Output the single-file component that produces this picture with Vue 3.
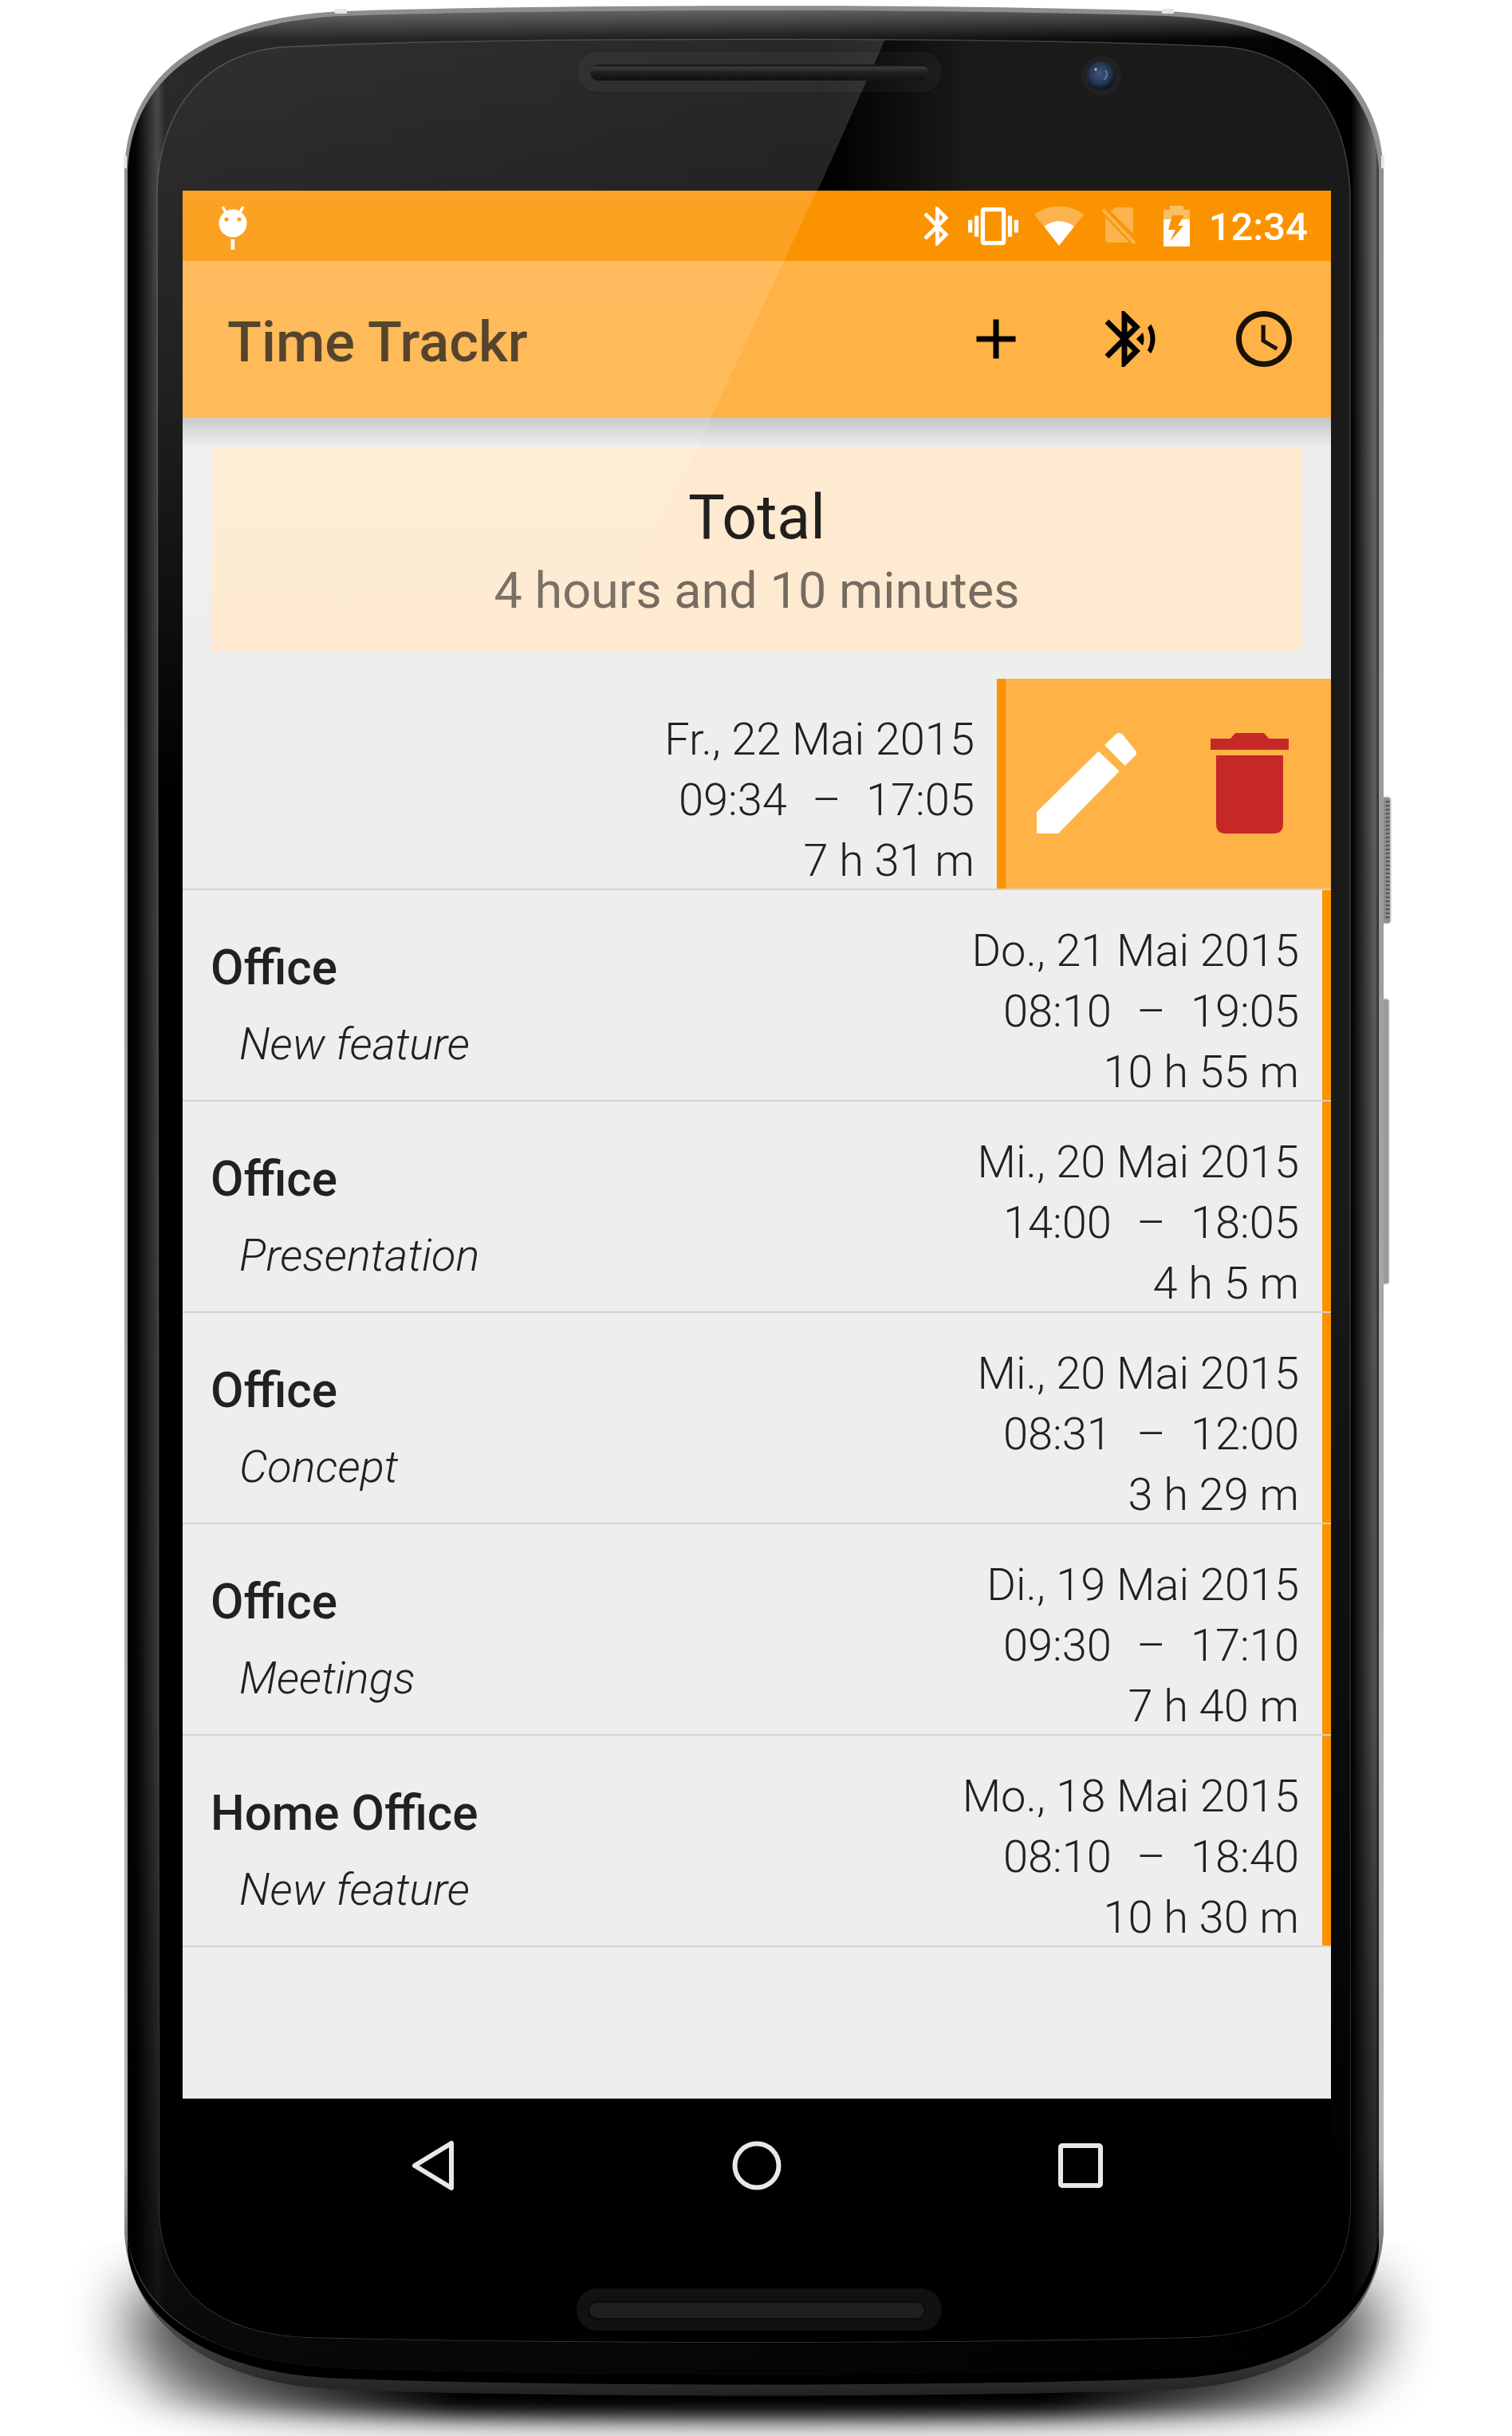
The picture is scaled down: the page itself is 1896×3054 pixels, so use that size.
<script setup>
const openRow = { date: 'Fr., 22 Mai 2015', time: '09:34  –  17:05', total: '7 h 31 m' }
const rows = [
  { title: 'Office', note: 'New feature', date: 'Do., 21 Mai 2015', time: '08:10  –  19:05', total: '10 h 55 m' },
  { title: 'Office', note: 'Presentation', date: 'Mi., 20 Mai 2015', time: '14:00  –  18:05', total: '4 h 5 m' },
  { title: 'Office', note: 'Concept', date: 'Mi., 20 Mai 2015', time: '08:31  –  12:00', total: '3 h 29 m' },
  { title: 'Office', note: 'Meetings', date: 'Di., 19 Mai 2015', time: '09:30  –  17:10', total: '7 h 40 m' },
  { title: 'Home Office', note: 'New feature', date: 'Mo., 18 Mai 2015', time: '08:10  –  18:40', total: '10 h 30 m' }
]
const outer = 'M156 210C162 88 262 22 430 14C700 5 1190 5 1462 14C1628 22 1728 88 1735 210V2800C1728 2904 1640 2990 1462 2996C1190 3006 700 3006 430 2996C250 2990 162 2904 156 2800Z'
const mid = 'M160 212C166 94 266 28 430 20C700 11 1190 11 1462 20C1624 28 1722 94 1729 212V2798C1722 2892 1636 2962 1462 2969C1190 2979 700 2979 430 2969C254 2962 166 2892 160 2798Z'
const glass = 'M197 240C200 130 262 68 352 59C620 46 1270 46 1540 59C1628 68 1688 130 1693 240V2775C1688 2870 1620 2925 1500 2930C1200 2938 690 2938 383 2930C270 2925 204 2870 200 2775Z'
</script>

<template>
  <div class="page">
    <svg class="device" width="1896" height="3054" viewBox="0 0 1896 3054">
      <defs>
        <filter id="blur" x="-20%" y="-40%" width="140%" height="180%"><feGaussianBlur stdDeviation="40" /></filter>
        <filter id="blurTight" x="-10%" y="-60%" width="120%" height="220%"><feGaussianBlur stdDeviation="12" /></filter>
        <linearGradient id="tightFade" gradientUnits="userSpaceOnUse" x1="170" y1="0" x2="1720" y2="0">
          <stop offset="0" stop-color="#000" stop-opacity="0" /><stop offset=".26" stop-color="#000" /><stop offset=".74" stop-color="#000" /><stop offset="1" stop-color="#000" stop-opacity="0" />
        </linearGradient>
        <linearGradient id="rim" x1="0" y1="0" x2="0" y2="1">
          <stop offset="0" stop-color="#8e8e8e" /><stop offset=".9" stop-color="#b5b5b5" /><stop offset=".97" stop-color="#4a4a4a" /><stop offset="1" stop-color="#222" />
        </linearGradient>
        <linearGradient id="side" gradientUnits="userSpaceOnUse" x1="160" y1="0" x2="1729" y2="0">
          <stop offset="0" stop-color="#000" /><stop offset=".007" stop-color="#050505" /><stop offset=".024" stop-color="#4a4a4a" /><stop offset=".03" stop-color="#2a2a2a" /><stop offset=".5" stop-color="#1a1a1a" /><stop offset=".978" stop-color="#000" /><stop offset=".997" stop-color="#6c6c6c" /><stop offset="1" stop-color="#333" />
        </linearGradient>
        <linearGradient id="sideShade" x1="0" y1="0" x2="0" y2="1">
          <stop offset="0" stop-color="#000" stop-opacity="0" /><stop offset=".72" stop-color="#000" stop-opacity=".25" /><stop offset="1" stop-color="#000" stop-opacity=".8" />
        </linearGradient>
        <linearGradient id="topLight" gradientUnits="userSpaceOnUse" x1="0" y1="12" x2="0" y2="50">
          <stop offset="0" stop-color="#fff" stop-opacity=".32" /><stop offset="1" stop-color="#fff" stop-opacity="0" />
        </linearGradient>
        <linearGradient id="glassBase" gradientUnits="userSpaceOnUse" x1="197" y1="0" x2="1693" y2="0">
          <stop offset="0" stop-color="#000" /><stop offset=".56" stop-color="#000" /><stop offset=".68" stop-color="#1a1a1a" /><stop offset="1" stop-color="#1a1a1a" />
        </linearGradient>
        <linearGradient id="glassFade" gradientUnits="userSpaceOnUse" x1="0" y1="1500" x2="0" y2="2750">
          <stop offset="0" stop-color="#000" stop-opacity="0" /><stop offset="1" stop-color="#000" />
        </linearGradient>
        <linearGradient id="gloss" gradientUnits="userSpaceOnUse" x1="0" y1="46" x2="0" y2="1000">
          <stop offset="0" stop-color="#fff" stop-opacity=".19" /><stop offset=".45" stop-color="#fff" stop-opacity=".13" /><stop offset="1" stop-color="#fff" stop-opacity="0" />
        </linearGradient>
        <linearGradient id="glossSide" gradientUnits="userSpaceOnUse" x1="200" y1="0" x2="1111" y2="0">
          <stop offset="0" stop-color="#000" stop-opacity="0" /><stop offset="1" stop-color="#000" stop-opacity=".45" />
        </linearGradient>
        <linearGradient id="slot" x1="0" y1="0" x2="0" y2="1">
          <stop offset="0" stop-color="#0a0a0a" /><stop offset=".18" stop-color="#3a3a3a" /><stop offset=".5" stop-color="#1f1f1f" /><stop offset="1" stop-color="#111" />
        </linearGradient>
        <radialGradient id="lens" cx=".45" cy=".42" r=".6">
          <stop offset="0" stop-color="#41587f" /><stop offset=".6" stop-color="#263655" /><stop offset="1" stop-color="#0c0f16" />
        </radialGradient>
        <clipPath id="glassClip"><path :d="glass" /></clipPath>
      </defs>

      <path class="shadow" d="M168 2870H1724V2950C1650 3006 1500 3016 945 3016C390 3016 240 3006 168 2950Z" filter="url(#blur)" />
      <path d="M170 2960H1720V3018C1400 3030 1200 3030 945 3030C700 3030 490 3030 170 3018Z" fill="url(#tightFade)" filter="url(#blurTight)" />

      <rect class="key" x="1733" y="999" width="11" height="159" rx="4" />
      <path class="key-grip" d="M1740 1004V1154" />
      <rect class="key key-thin" x="1733" y="1252" width="9" height="358" rx="4" />

      <path :d="outer" fill="url(#rim)" />
      <path :d="mid" fill="url(#side)" />
      <path :d="mid" fill="url(#sideShade)" />
      <path :d="mid" fill="url(#topLight)" />
      <path d="M160 2800C166 2894 254 2962 430 2969C700 2979 1190 2979 1462 2969C1636 2962 1722 2892 1729 2798V2820C1722 2900 1636 2977 1462 2982C1190 2992 700 2992 430 2982C254 2977 166 2900 160 2820Z" fill="#000" />

      <path :d="glass" fill="url(#glassBase)" stroke="#6a6a6a" stroke-width="1.500" stroke-opacity=".55" />
      <g clip-path="url(#glassClip)">
        <polygon points="190,40 1114,40 686,1000 190,1000" fill="url(#gloss)" />
        <polygon points="190,40 1114,40 686,1000 190,1000" fill="url(#glossSide)" opacity=".4" />
        <rect x="190" y="1500" width="1510" height="1450" fill="url(#glassFade)" />
      </g>

      <rect x="723" y="64" width="458" height="52" rx="26" fill="#fff" fill-opacity=".035" stroke="#000" stroke-opacity=".25" />
      <rect x="740" y="81" width="424" height="20" rx="10" fill="url(#slot)" />
      <rect x="723" y="2869" width="458" height="53" rx="26" fill="#111" />
      <rect x="738" y="2886" width="422" height="21" rx="10" fill="#1e1e1e" stroke="#0a0a0a" stroke-width="2" />

      <circle cx="1381" cy="95" r="25" fill="#212121" />
      <ellipse cx="1381" cy="95" rx="18" ry="18" fill="url(#lens)" />
      <path d="M1386 88c3 3 3 9-2 12" fill="none" stroke="#8ea2c4" stroke-width="1.500" opacity=".7" />
      <circle cx="1374" cy="87" r="1.400" fill="#cfd8e8" />

      <rect x="420" y="11" width="15" height="6" fill="#e6e6e6" />
      <rect x="1457" y="11" width="15" height="6" fill="#e6e6e6" />
      <rect x="155" y="195" width="4" height="16" fill="#e6e6e6" />
      <rect x="1732" y="195" width="4" height="16" fill="#e6e6e6" />
    </svg>

    <main class="screen">
      <header class="status">
        <svg class="droid" width="44" height="60" viewBox="0 0 44 60">
          <ellipse cx="22" cy="24" rx="17.500" ry="17.500" fill="#fff" />
          <path d="M9 3l5 9M35 3l-5 9" stroke="#fff" stroke-width="3.500" fill="none" />
          <rect x="19.600" y="44" width="4.600" height="13" fill="#fff" />
          <circle cx="14" cy="19" r="2.600" fill="#fb9300" /><circle cx="30" cy="19" r="2.600" fill="#fb9300" />
        </svg>
        <svg class="st st-bt" width="59" height="59" viewBox="0 0 24 24" fill="#fff">
          <path d="M17.71 7.71L12 2h-1v7.59L6.41 5 5 6.41 10.59 12 5 17.59 6.41 19 11 14.41V22h1l5.71-5.71-4.3-4.29 4.3-4.29zM13 5.83l1.88 1.88L13 9.59V5.83zm1.88 10.46L13 18.17v-3.76l1.88 1.88z" />
        </svg>
        <svg class="st st-vib" width="63" height="63" viewBox="0 0 24 24" fill="#fff">
          <path d="M0 15h2V9H0v6zm3 2h2V7H3v10zm19-8v6h2V9h-2zm-3 8h2V7h-2v10zM16.5 3h-9C6.67 3 6 3.67 6 4.5v15c0 .83.67 1.5 1.5 1.5h9c.83 0 1.5-.67 1.5-1.5v-15c0-.83-.67-1.5-1.5-1.5zM16 19H8V5h8v14z" />
        </svg>
        <svg class="st st-wifi" width="62" height="50" viewBox="0 0 62 50">
          <path d="M0 11C18-3 44-3 62 11L31 50Z" fill="#fff" fill-opacity=".3" />
          <path d="M12.500 26C23 17 39 17 50 26L31 50Z" fill="#fff" />
        </svg>
        <svg class="st st-sim" width="45" height="46" viewBox="0 0 45 46" fill="#fff" fill-opacity=".3">
          <path d="M18 0H36Q40 0 40 4V33L12 5Z" />
          <path d="M5 12L35 44H9Q5 44 5 40Z" />
          <path d="M2 3L42 45" stroke="#fff" stroke-opacity=".3" stroke-width="4" fill="none" />
        </svg>
        <svg class="st st-bat" width="33" height="51" viewBox="0 0 33 51">
          <path d="M8 0H25V5H33V17H0V5H8Z" fill="#fff" fill-opacity=".4" />
          <rect y="17" width="33" height="34" fill="#fff" />
          <path d="M26 12H11L6 30H15L8 45L25 25H18Z" fill="#fb9300" />
        </svg>
        <span class="clock">12:34</span>
      </header>

      <div class="appbar">
        <h1 class="title">Time Trackr</h1>
        <div class="actions">
          <button class="act" aria-label="Add">
            <svg width="84" height="84" viewBox="0 0 24 24"><path d="M19 13h-6v6h-2v-6H5v-2h6V5h2v6h6v2z" /></svg>
          </button>
          <button class="act" aria-label="Bluetooth">
            <svg width="84" height="84" viewBox="0 0 24 24"><path d="M14.24 12.01l2.32 2.32c.28-.72.44-1.51.44-2.33 0-.82-.16-1.59-.43-2.31l-2.33 2.32zm5.29-5.3l-1.26 1.26c.63 1.21.98 2.57.98 4.02s-.36 2.82-.98 4.02l1.2 1.2c.97-1.54 1.54-3.36 1.54-5.31-.01-1.89-.55-3.67-1.48-5.19zm-3.82 1L10 2H9v7.59L4.41 5 3 6.41 8.59 12 3 17.59 4.41 19 9 14.41V22h1l5.71-5.71-4.3-4.29 4.3-4.29zM11 5.83l1.88 1.88L11 9.59V5.83zm1.88 10.46L11 18.17v-3.76l1.88 1.88z" /></svg>
          </button>
          <button class="act" aria-label="History">
            <svg width="84" height="84" viewBox="0 0 24 24"><path d="M11.99 2C6.47 2 2 6.48 2 12s4.47 10 9.99 10C17.52 22 22 17.52 22 12S17.52 2 11.99 2zM12 20c-4.42 0-8-3.58-8-8s3.58-8 8-8 8 3.58 8 8-3.58 8-8 8z" /><path d="M12.500 7H11v6l5.250 3.150.75-1.230-4.500-2.670z" /></svg>
          </button>
        </div>
      </div>

      <div class="content">
        <section class="card">
          <div class="card-title">Total</div>
          <div class="card-sub">4 hours and 10 minutes</div>
        </section>

        <div class="row row-open">
          <div class="times">
            <div>{{ openRow.date }}</div>
            <div class="pre">{{ openRow.time }}</div>
            <div>{{ openRow.total }}</div>
          </div>
          <div class="swipe">
            <svg width="127" height="126" viewBox="0 0 127 126" class="pencil">
              <path d="M0 126V99L77.500 22.700L103.600 48L27 126Z" fill="#fff" />
              <path d="M85 15L100 1Q103-1 107 1L123 21Q127 25 123 29L110.700 41Z" fill="#fff" />
            </svg>
            <svg width="98" height="126" viewBox="0 0 98 126" class="trash">
              <path d="M0 7H25L31 0H67L73 7H98V21H0ZM7 28H91V114Q91 126 79 126H19Q7 126 7 114Z" fill="#c62828" />
            </svg>
          </div>
        </div>

        <div v-for="(r, i) in rows" :key="i" class="row">
          <div class="who">
            <div class="who-title">{{ r.title }}</div>
            <div class="who-note">{{ r.note }}</div>
          </div>
          <div class="times">
            <div>{{ r.date }}</div>
            <div class="pre">{{ r.time }}</div>
            <div>{{ r.total }}</div>
          </div>
        </div>
      </div>

      <nav class="nav">
        <svg width="84" height="84" viewBox="0 0 84 84" class="nav-ico">
          <path d="M19 42L65 14V70Z" />
        </svg>
        <svg width="84" height="84" viewBox="0 0 84 84" class="nav-ico">
          <circle cx="42" cy="42" r="27.500" />
        </svg>
        <svg width="84" height="84" viewBox="0 0 84 84" class="nav-ico">
          <rect x="17" y="17" width="50" height="50" rx="2" />
        </svg>
      </nav>

      <div class="screen-gloss"></div>
    </main>
  </div>
</template>

<style>
html, body { margin: 0; background: #fff; }
</style>

<style scoped>
.page {
  position: relative;
  width: 1896px;
  height: 3054px;
  overflow: hidden;
  background: #fff;
  padding: 239px 0 0 229px;
  box-sizing: border-box;
  font-family: Roboto, "Liberation Sans", sans-serif;
}
.device { position: absolute; left: 0; top: 0; }
.shadow { fill: #000; opacity: .8; }
.key { fill: #8c8c8c; stroke: #d8d8d8; stroke-width: 1.5; }
.key-thin { fill: #9a9a9a; }
.key-grip { stroke: #555; stroke-width: 5; stroke-dasharray: 2 3; fill: none; }

.screen {
  position: relative;
  width: 1440px;
  height: 2560px;
  display: flex;
  flex-direction: column;
  background: #eee;
  overflow: hidden;
}

.status {
  height: 88px;
  flex: none;
  display: flex;
  align-items: center;
  padding: 0 29px 0 41px;
  background: #fb9300;
  color: #fff;
}
.droid { flex: none; margin-top: 6px; margin-right: auto; }
.st { flex: none; display: block; }
.st-vib { margin-left: 9px; }
.st-wifi { margin-left: 20px; }
.st-sim { margin-left: 22px; }
.st-bat { margin-left: 33px; }
.clock { margin-left: 24px; padding-top: 3px; font-size: 49px; line-height: 85px; font-weight: 500; }

.appbar {
  height: 196px;
  flex: none;
  display: flex;
  align-items: center;
  justify-content: space-between;
  padding-left: 56px;
  background: #ffb246;
}
.title {
  margin: 0;
  padding-top: 7px;
  font-size: 70.500px;
  font-weight: 500;
  line-height: 82px;
  color: rgba(0, 0, 0, .75);
}
.actions { display: flex; }
.act {
  width: 168px;
  height: 196px;
  padding: 0;
  border: 0;
  background: none;
  display: flex;
  align-items: center;
  justify-content: center;
}
.act svg { display: block; fill: #000; }
.act:last-child svg { fill: #1a1206; }

.content {
  flex: 1;
  min-height: 0;
  position: relative;
  padding-top: 38px;
  background: linear-gradient(#c4c4c4, #eee 38px) no-repeat;
}

.card {
  height: 255px;
  margin: 0 36px 35px;
  background: #feead1;
  display: flex;
  flex-direction: column;
  align-items: center;
  padding-top: 43px;
  box-sizing: border-box;
}
.card-title { font-size: 77px; line-height: 91px; color: rgba(0, 0, 0, .87); }
.card-sub { font-size: 63px; line-height: 91px; color: rgba(0, 0, 0, .54); }

.row {
  height: 265px;
  box-sizing: border-box;
  display: flex;
  justify-content: space-between;
  border-bottom: 2px solid #d3d3d3;
  background: #eee;
  box-shadow: inset -11px 0 0 #fb9300;
  padding: 0 40px 0 36px;
  color: #212121;
}
.row-open { padding: 0; box-shadow: none; justify-content: flex-end; }
.row-open .times { margin-right: 28px; }

.who { padding-top: 63px; }
.who-title { font-size: 60.200px; font-weight: 500; line-height: 70px; margin-left: -1px; }
.who-note { font-size: 56px; font-weight: 300; font-style: italic; line-height: 70px; margin-top: 25px; padding-left: 35px; }

.times {
  padding-top: 38px;
  text-align: right;
  font-size: 56px;
  line-height: 76px;
  font-weight: 300;
}
.pre { white-space: pre; word-spacing: 2px; }

.swipe {
  width: 419px;
  box-sizing: border-box;
  border-left: 11px solid #fb9300;
  background: #ffb246;
  display: flex;
  align-items: flex-start;
  padding: 68px 0 0 39px;
}
.trash { margin-left: 91px; }
.pencil, .trash { display: block; flex: none; }

.nav {
  height: 168px;
  flex: none;
  background: #000;
  display: flex;
  justify-content: center;
  align-items: center;
  gap: 322px;
}
.nav-ico { display: block; fill: none; stroke: #e8e8e8; stroke-width: 6; stroke-linejoin: round; }

.screen-gloss {
  position: absolute;
  left: 0;
  top: 0;
  width: 1440px;
  height: 620px;
  clip-path: polygon(0 0, 795px 0, 507px 620px, 0 620px);
  background: linear-gradient(rgba(255,255,255,.14), rgba(255,255,255,.1) 270px, rgba(255,255,255,.1) 330px, rgba(255,255,255,0) 620px);
  pointer-events: none;
}
</style>
